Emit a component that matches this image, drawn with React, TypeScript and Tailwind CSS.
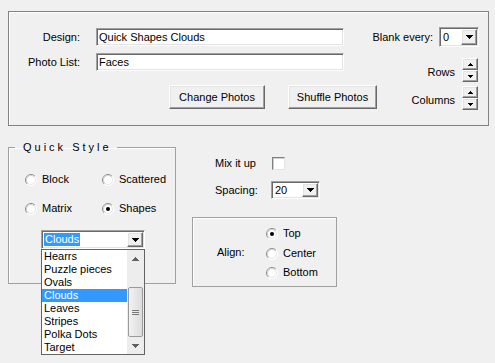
import type { ReactNode } from 'react';

const SUNKEN =
  'border border-t-[#a0a0a0] border-l-[#a0a0a0] border-r-white border-b-white bg-white p-px shadow-[inset_1px_1px_0_#696969,inset_-1px_-1px_0_#e3e3e3]';
const RAISED =
  'border border-t-white border-l-white border-r-[#696969] border-b-[#696969] bg-[#f0f0f0] shadow-[inset_-1px_-1px_0_#a0a0a0,inset_1px_1px_0_#e3e3e3]';

const SHAPES = ['Hearrs', 'Puzzle pieces', 'Ovals', 'Clouds', 'Leaves', 'Stripes', 'Polka Dots', 'Target'];

export default function App() {
  return (
    <div className="flex h-[363px] w-[495px] flex-col bg-[#f0f0f0] pl-[8px] pt-[11px] font-['Liberation_Sans',Arial,sans-serif] text-[11px] leading-[13px] text-black">
      {/* top group */}
      <div className="flex h-[115px] w-[481px] border border-[#828282] shadow-[inset_1px_1px_0_#ffffff]">
        <div className="flex w-[335px] shrink-0 flex-col">
          <div className="mt-[16px] flex items-center">
            <span className="w-[71px] text-right">Design:</span>
            <TextBox className="ml-[16px] h-[18px] w-[248px]" value="Quick Shapes Clouds" />
          </div>
          <div className="mt-[7px] flex items-center">
            <span className="w-[71px] text-right">Photo List:</span>
            <TextBox className="ml-[16px] h-[18px] w-[248px]" value="Faces" />
          </div>
          <div className="ml-[160px] mt-[14px] flex gap-[23px]">
            <PushButton className="w-[96px]">Change Photos</PushButton>
            <PushButton className="w-[89px]">Shuffle Photos</PushButton>
          </div>
        </div>

        <div className="flex flex-1 flex-col items-end whitespace-nowrap pr-[9px]">
          <div className="mt-[15px] flex h-[20px] items-center gap-[6px]">
            <span>Blank every:</span>
            <Combo className="h-[20px] w-[40px]" value="0" />
          </div>
          <div className="mr-px mt-[11px] flex items-end gap-[7px]">
            <span className="mb-[3px]">Rows</span>
            <Spin />
          </div>
          <div className="mr-px mt-[4px] flex items-end gap-[7px]">
            <span className="mb-[3px]">Columns</span>
            <Spin />
          </div>
        </div>
      </div>

      {/* lower area */}
      <div className="mt-[15px] flex">
        <fieldset className="h-[143px] w-[168px] border border-[#a0a0a0] shadow-[inset_1px_1px_0_#ffffff]">
          <legend className="ml-[6px] pl-[8px] pr-[5px] tracking-[3px]">Quick Style</legend>
          <div className="mt-[19px] flex h-[13px] items-center pl-[16px]">
            <RadioItem className="w-[77px]" label="Block" />
            <RadioItem label="Scattered" />
          </div>
          <div className="mt-[16px] flex h-[13px] items-center pl-[16px]">
            <RadioItem className="w-[77px]" label="Matrix" />
            <RadioItem label="Shapes" checked />
          </div>
          <div className="relative ml-[32px] mt-[15px] w-[104px]">
            <Combo className="h-[19px] w-[104px]" value="Clouds" selected />
            <DropList />
          </div>
        </fieldset>

        <div className="ml-[16px] flex flex-col">
          <div className="mt-[16px] flex h-[13px] items-center pl-[23px]">
            <span className="w-[57px]">Mix it up</span>
            <CheckBox />
          </div>
          <div className="mt-[11px] flex items-center pl-[23px]">
            <span className="w-[56px]">Spacing:</span>
            <Combo className="h-[18px] w-[49px]" value="20" />
          </div>
          <div className="mt-[18px] flex h-[70px] w-[145px] border border-[#a0a0a0] shadow-[inset_1px_1px_0_#ffffff]">
            <div className="flex w-[73px] items-center pl-[24px]">Align:</div>
            <div className="flex flex-col pt-[9px]">
              <RadioItem className="h-[13px]" label="Top" checked />
              <RadioItem className="mt-[7px] h-[13px]" label="Center" />
              <RadioItem className="mt-[6px] h-[13px]" label="Bottom" />
            </div>
          </div>
        </div>
      </div>
    </div>
  );
}

function TextBox(props: { className: string; value: string }) {
  return (
    <div className={`${SUNKEN} ${props.className} flex items-center pl-[2px]`}>
      <span>{props.value}</span>
    </div>
  );
}

function PushButton(props: { className: string; children: ReactNode }) {
  return (
    <div className={`${RAISED} ${props.className} flex h-[24px] shrink-0 items-center justify-center whitespace-nowrap`}>
      {props.children}
    </div>
  );
}

function Combo(props: { className: string; value: string; selected?: boolean }) {
  return (
    <div className={`${SUNKEN} ${props.className} flex items-stretch`}>
      <div className="flex flex-1 items-center pl-px">
        {props.selected ? (
          <span className="bg-[#3399ff] px-px text-white">{props.value}</span>
        ) : (
          <span className="pl-px">{props.value}</span>
        )}
      </div>
      <div className={`${RAISED} flex w-[16px] items-center justify-center`}>
        <Triangle down size={7} color="#000" />
      </div>
    </div>
  );
}

function Triangle(props: { down?: boolean; size: number; color: string }) {
  const rows = Math.ceil(props.size / 2);
  const rects = [];
  for (let i = 0; i < rows; i++) {
    const w = props.size - i * 2;
    const y = props.down ? i : rows - 1 - i;
    rects.push(<rect key={i} x={i} y={y} width={w} height={1} fill={props.color} />);
  }
  return (
    <svg width={props.size} height={rows} viewBox={`0 0 ${props.size} ${rows}`} shapeRendering="crispEdges">
      {rects}
    </svg>
  );
}

function Spin() {
  return (
    <div className="flex w-[16px] flex-col">
      <div className={`${RAISED} flex h-[12px] items-center justify-center`}>
        <Triangle size={5} color="#000" />
      </div>
      <div className={`${RAISED} flex h-[12px] items-center justify-center`}>
        <Triangle down size={5} color="#000" />
      </div>
    </div>
  );
}

function Radio(props: { checked?: boolean }) {
  return (
    <svg width="12" height="12" viewBox="0 0 12 12" className="shrink-0">
      <defs>
        <linearGradient id="rOuter" x1="0" y1="0" x2="1" y2="1">
          <stop offset="0.45" stopColor="#8a8a8a" />
          <stop offset="0.55" stopColor="#ffffff" />
        </linearGradient>
        <linearGradient id="rInner" x1="0" y1="0" x2="1" y2="1">
          <stop offset="0.45" stopColor="#cfcfcf" />
          <stop offset="0.55" stopColor="#e3e3e3" />
        </linearGradient>
      </defs>
      <circle cx="6" cy="6" r="5.5" fill="#fff" stroke="url(#rOuter)" />
      <circle cx="6" cy="6" r="4.5" fill="#fff" stroke="url(#rInner)" />
      {props.checked && <circle cx="6" cy="6" r="2" fill="#000" />}
    </svg>
  );
}

function RadioItem(props: { label: string; checked?: boolean; className?: string }) {
  return (
    <div className={`flex items-center ${props.className ?? ''}`}>
      <Radio checked={props.checked} />
      <span className="ml-[5px]">{props.label}</span>
    </div>
  );
}

function CheckBox() {
  return (
    <div className="h-[13px] w-[13px] border border-t-[#808080] border-l-[#808080] border-r-[#e3e3e3] border-b-[#e3e3e3] bg-white shadow-[inset_1px_1px_0_#d0d0d0]" />
  );
}

function DropList() {
  return (
    <div className="absolute left-0 top-[19px] z-10 flex h-[106px] w-[104px] border border-[#646464] bg-white">
      <div className="flex w-[85px] flex-col">
        {SHAPES.map((s) => (
          <div
            key={s}
            className={`h-[13px] whitespace-nowrap pl-[2px] ${s === 'Clouds' ? 'bg-[#3399ff] text-white' : ''}`}
          >
            {s}
          </div>
        ))}
      </div>
      <div className="flex w-[17px] flex-col bg-[#ededed]">
        <div className="flex h-[17px] items-center justify-center">
          <Triangle size={7} color="#606060" />
        </div>
        <div className="flex-1 pt-[20px]">
          <div className="mx-px flex h-[50px] flex-col items-center justify-center gap-[1px] rounded-[2px] border border-[#9a9a9a] bg-gradient-to-r from-[#f2f2f2] to-[#dcdcdc]">
            <div className="h-px w-[7px] bg-[#7a7a7a]" />
            <div className="h-px w-[7px] bg-[#7a7a7a]" />
            <div className="h-px w-[7px] bg-[#7a7a7a]" />
          </div>
        </div>
        <div className="flex h-[17px] items-center justify-center">
          <Triangle down size={7} color="#606060" />
        </div>
      </div>
    </div>
  );
}
